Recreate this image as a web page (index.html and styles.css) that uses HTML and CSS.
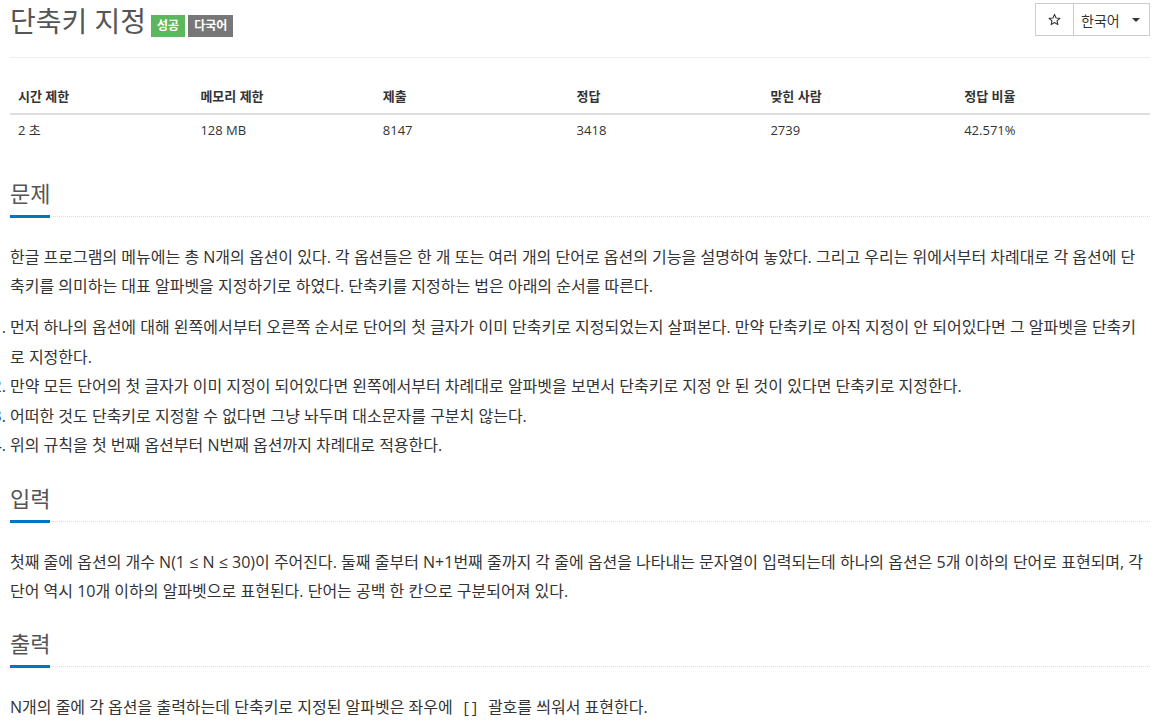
FILE: index.html
```html
<!DOCTYPE html>
<html lang="ko">
<head>
    <meta charset="UTF-8">
    <meta name="viewport" content="width=device-width, initial-scale=1.0">
    <title>단축키 지정</title>
    <link rel="stylesheet" href="styles.css">
</head>
<body>
    <div class="container">
        <div class="page-header">
            <h1 class="title">
                <span class="title-text">단축키 지정</span>
                <span class="label label-success">성공</span>
                <span class="label label-default">다국어</span>
            </h1>
            <div class="btn-group">
                <button class="btn btn-star">
                    <svg width="13" height="13" viewBox="0 0 24 24"><path d="M12 2.5l2.9 6.6 7.1.6-5.4 4.7 1.6 7-6.2-3.7-6.2 3.7 1.6-7L2 9.7l7.1-.6z" fill="none" stroke="#333" stroke-width="2" stroke-linejoin="round"/></svg>
                </button>
                <button class="btn btn-lang">한국어<span class="caret"></span></button>
            </div>
        </div>

        <table class="problem-info">
            <thead>
                <tr>
                    <th>시간 제한</th>
                    <th>메모리 제한</th>
                    <th>제출</th>
                    <th>정답</th>
                    <th>맞힌 사람</th>
                    <th>정답 비율</th>
                </tr>
            </thead>
            <tbody>
                <tr>
                    <td>2 초</td>
                    <td>128 MB</td>
                    <td>8147</td>
                    <td>3418</td>
                    <td>2739</td>
                    <td>42.571%</td>
                </tr>
            </tbody>
        </table>

        <section class="problem-section">
            <div class="headline"><h2>문제</h2></div>
            <div class="problem-text">
                <p>한글 프로그램의 메뉴에는 총 N개의 옵션이 있다. 각 옵션들은 한 개 또는 여러 개의 단어로 옵션의 기능을 설명하여 놓았다. 그리고 우리는 위에서부터 차례대로 각 옵션에 단축키를 의미하는 대표 알파벳을 지정하기로 하였다. 단축키를 지정하는 법은 아래의 순서를 따른다.</p>
                <ol>
                    <li>먼저 하나의 옵션에 대해 왼쪽에서부터 오른쪽 순서로 단어의 첫 글자가 이미 단축키로 지정되었는지 살펴본다. 만약 단축키로 아직 지정이 안 되어있다면 그 알파벳을 단축키로 지정한다.</li>
                    <li>만약 모든 단어의 첫 글자가 이미 지정이 되어있다면 왼쪽에서부터 차례대로 알파벳을 보면서 단축키로 지정 안 된 것이 있다면 단축키로 지정한다.</li>
                    <li>어떠한 것도 단축키로 지정할 수 없다면 그냥 놔두며 대소문자를 구분치 않는다.</li>
                    <li>위의 규칙을 첫 번째 옵션부터 N번째 옵션까지 차례대로 적용한다.</li>
                </ol>
            </div>
        </section>

        <section class="problem-section">
            <div class="headline"><h2>입력</h2></div>
            <div class="problem-text">
                <p>첫째 줄에 옵션의 개수 N(1 ≤ N ≤ 30)이 주어진다. 둘째 줄부터 N+1번째 줄까지 각 줄에 옵션을 나타내는 문자열이 입력되는데 하나의 옵션은 5개 이하의 단어로 표현되며, 각 단어 역시 10개 이하의 알파벳으로 표현된다. 단어는 공백 한 칸으로 구분되어져 있다.</p>
            </div>
        </section>

        <section class="problem-section">
            <div class="headline"><h2>출력</h2></div>
            <div class="problem-text">
                <p>N개의 줄에 각 옵션을 출력하는데 단축키로 지정된 알파벳은 좌우에 <code>[]</code> 괄호를 씌워서 표현한다.</p>
            </div>
        </section>
    </div>
</body>
</html>
```

FILE: styles.css
```css
body {
    margin: 0;
    font-family: "Open Sans", "Noto Sans CJK KR", sans-serif;
    color: #333;
}
.container {
    width: 1140px;
    margin-left: 10px;
}
.page-header {
    display: flex;
    justify-content: space-between;
    align-items: flex-start;
    padding: 3px 0 18px;
    border-bottom: 1px solid #eee;
}
.title {
    display: flex;
    align-items: flex-start;
    margin: 0;
    font-size: 28px;
    font-weight: normal;
    line-height: 36px;
    color: #555;
}
.title-text {
    margin-right: 5px;
}
.label {
    margin-top: 12px;
    margin-right: 3px;
    padding: 0 6px;
    height: 22px;
    line-height: 22px;
    font-size: 12px;
    font-weight: bold;
    color: #fff;
}
.label-success {
    background-color: #5cb85c;
}
.label-default {
    background-color: #777;
}
.btn-group {
    display: flex;
}
.btn {
    display: flex;
    align-items: center;
    height: 33px;
    padding: 0 12px;
    border: 1px solid #ccc;
    background: #fff;
    color: #333;
    font-family: inherit;
    font-size: 14px;
}
.btn-star {
    width: 39px;
    justify-content: center;
}
.btn-lang {
    width: 77px;
    margin-left: -1px;
    padding: 0 9px 0 7px;
}
.caret {
    margin-left: auto;
    width: 0;
    height: 0;
    border-top: 4px solid #333;
    border-left: 4px solid transparent;
    border-right: 4px solid transparent;
}
.problem-info {
    width: 100%;
    border-collapse: collapse;
    margin: 21px 0 34px;
    font-size: 13px;
}
.problem-info th, .problem-info td {
    padding: 8px;
    line-height: 18px;
    text-align: left;
}
.problem-info td {
    padding-top: 6px;
}
.problem-info th {
    font-weight: bold;
    border-bottom: 2px solid #ddd;
}
.problem-info th:nth-child(1), .problem-info th:nth-child(2) {
    width: 16%;
}
.problem-info th:nth-child(n+3) {
    width: 17%;
}
.problem-section {
    margin-top: 25px;
}
.headline {
    display: flex;
    border-bottom: 1px dotted #ddd;
    margin-bottom: 26px;
}
.headline h2 {
    margin: 0 0 -2px;
    padding-bottom: 10px;
    border-bottom: 3px solid #0076c0;
    font-size: 22px;
    font-weight: normal;
    line-height: 24px;
    color: #555;
}
.problem-text {
    font-size: 16px;
    line-height: 29px;
    word-break: break-all;
}
.problem-text p {
    margin: 0 0 12px;
}
.problem-text ol {
    margin: 0 0 12px;
    padding-left: 0;
}
.problem-text li {
    line-height: 29.5px;
}
.problem-text code {
    padding: 0 5px;
    font-family: "Liberation Mono", monospace;
    font-size: 14px;
}
```
